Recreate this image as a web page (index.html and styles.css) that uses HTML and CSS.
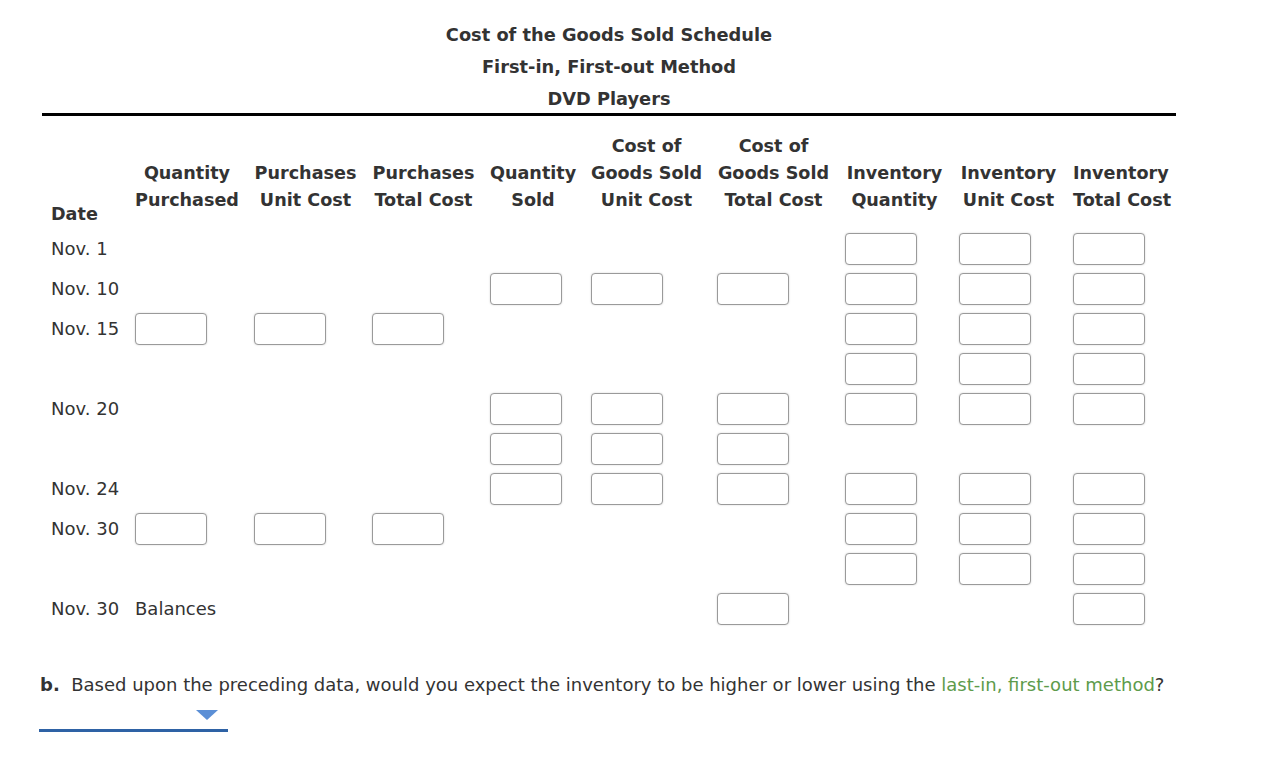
FILE: index.html
```html
<!DOCTYPE html>
<html>
<head>
<meta charset="utf-8">
<link rel="stylesheet" href="styles.css">
</head>
<body>
<div class="page">
  <div class="titles">
    <div class="title">Cost of the Goods Sold Schedule</div>
    <div class="title">First-in, First-out Method</div>
    <div class="title">DVD Players</div>
  </div>
  <div class="rule"></div>
  <div class="sched">
    <div class="hd date">Date</div>
    <div class="hd">Quantity<br>Purchased</div>
    <div class="hd">Purchases<br>Unit Cost</div>
    <div class="hd">Purchases<br>Total Cost</div>
    <div class="hd">Quantity<br>Sold</div>
    <div class="hd">Cost of<br>Goods Sold<br>Unit Cost</div>
    <div class="hd">Cost of<br>Goods Sold<br>Total Cost</div>
    <div class="hd">Inventory<br>Quantity</div>
    <div class="hd">Inventory<br>Unit Cost</div>
    <div class="hd">Inventory<br>Total Cost</div>

    <!-- Nov 1 -->
    <div class="c lbl">Nov. 1</div>
    <div class="c"></div><div class="c"></div><div class="c"></div>
    <div class="c"></div><div class="c"></div><div class="c"></div>
    <div class="c"><span class="box"></span></div><div class="c"><span class="box"></span></div><div class="c"><span class="box"></span></div>

    <!-- Nov 10 -->
    <div class="c lbl">Nov. 10</div>
    <div class="c"></div><div class="c"></div><div class="c"></div>
    <div class="c"><span class="box"></span></div><div class="c"><span class="box"></span></div><div class="c"><span class="box"></span></div>
    <div class="c"><span class="box"></span></div><div class="c"><span class="box"></span></div><div class="c"><span class="box"></span></div>

    <!-- Nov 15 -->
    <div class="c lbl">Nov. 15</div>
    <div class="c"><span class="box"></span></div><div class="c"><span class="box"></span></div><div class="c"><span class="box"></span></div>
    <div class="c"></div><div class="c"></div><div class="c"></div>
    <div class="c"><span class="box"></span></div><div class="c"><span class="box"></span></div><div class="c"><span class="box"></span></div>

    <!-- blank -->
    <div class="c lbl"></div>
    <div class="c"></div><div class="c"></div><div class="c"></div>
    <div class="c"></div><div class="c"></div><div class="c"></div>
    <div class="c"><span class="box"></span></div><div class="c"><span class="box"></span></div><div class="c"><span class="box"></span></div>

    <!-- Nov 20 -->
    <div class="c lbl">Nov. 20</div>
    <div class="c"></div><div class="c"></div><div class="c"></div>
    <div class="c"><span class="box"></span></div><div class="c"><span class="box"></span></div><div class="c"><span class="box"></span></div>
    <div class="c"><span class="box"></span></div><div class="c"><span class="box"></span></div><div class="c"><span class="box"></span></div>

    <!-- blank -->
    <div class="c lbl"></div>
    <div class="c"></div><div class="c"></div><div class="c"></div>
    <div class="c"><span class="box"></span></div><div class="c"><span class="box"></span></div><div class="c"><span class="box"></span></div>
    <div class="c"></div><div class="c"></div><div class="c"></div>

    <!-- Nov 24 -->
    <div class="c lbl">Nov. 24</div>
    <div class="c"></div><div class="c"></div><div class="c"></div>
    <div class="c"><span class="box"></span></div><div class="c"><span class="box"></span></div><div class="c"><span class="box"></span></div>
    <div class="c"><span class="box"></span></div><div class="c"><span class="box"></span></div><div class="c"><span class="box"></span></div>

    <!-- Nov 30 -->
    <div class="c lbl">Nov. 30</div>
    <div class="c"><span class="box"></span></div><div class="c"><span class="box"></span></div><div class="c"><span class="box"></span></div>
    <div class="c"></div><div class="c"></div><div class="c"></div>
    <div class="c"><span class="box"></span></div><div class="c"><span class="box"></span></div><div class="c"><span class="box"></span></div>

    <!-- blank -->
    <div class="c lbl"></div>
    <div class="c"></div><div class="c"></div><div class="c"></div>
    <div class="c"></div><div class="c"></div><div class="c"></div>
    <div class="c"><span class="box"></span></div><div class="c"><span class="box"></span></div><div class="c"><span class="box"></span></div>

    <!-- Nov 30 Balances -->
    <div class="c lbl">Nov. 30</div>
    <div class="c lbl">Balances</div><div class="c"></div><div class="c"></div>
    <div class="c"></div><div class="c"></div><div class="c"><span class="box"></span></div>
    <div class="c"></div><div class="c"></div><div class="c"><span class="box"></span></div>
  </div>

  <p class="question"><b>b.</b>&nbsp; Based upon the preceding data, would you expect the inventory to be higher or lower using the <span class="term">last-in, first-out method</span>?</p>
  <div class="select"><span class="arrow"></span></div>
</div>
</body>
</html>
```
FILE: styles.css
```css
html, body {
  margin: 0;
  padding: 0;
  background: #fff;
}
body {
  font-family: "DejaVu Sans", Verdana, sans-serif;
  color: #333;
  font-size: 18px;
}
.page {
  padding: 19px 0 0 0;
}
.titles {
  width: 1134px;
  margin-left: 42px;
  text-align: center;
}
.title {
  font-weight: bold;
  line-height: 32px;
  height: 32px;
  font-size: 17.8px;
}
.rule {
  width: 1134px;
  margin-left: 42px;
  height: 3px;
  background: #000;
  margin-top: -2px;
}
.sched {
  display: grid;
  grid-template-columns: 84px 119px 118px 118px 101px 126px 128px 114px 114px 103px;
  grid-template-rows: 97px;
  grid-auto-rows: 40px;
  margin-left: 51px;
  margin-top: 16px;
}
.hd {
  font-weight: bold;
  font-size: 17.6px;
  line-height: 27px;
  text-align: center;
  padding-right: 15px;
  padding-bottom: 15px;
  align-self: end;
  white-space: nowrap;
  grid-row: 1;
}
.hd.date {
  text-align: left;
  padding-bottom: 1px;
}
.c {
  display: flex;
  align-items: center;
  white-space: nowrap;
}
.lbl {
  line-height: 40px;
}
.box {
  display: block;
  width: 72px;
  height: 32px;
  box-sizing: border-box;
  border: 1px solid #9a9a9a;
  border-radius: 4px;
  background: #fff;
  box-shadow: 0 0 2px rgba(0,0,0,0.18);
}
.question {
  margin: 44px 0 0 40px;
  line-height: 24px;
}
.term {
  color: #5d9b4b;
}
.select {
  position: relative;
  width: 189px;
  height: 3px;
  margin: 32px 0 0 39px;
  background: #2e62a5;
}
.arrow {
  position: absolute;
  left: 157px;
  top: -19px;
  width: 0;
  height: 0;
  border-left: 11px solid transparent;
  border-right: 11px solid transparent;
  border-top: 10px solid #5b8fd6;
}
```
